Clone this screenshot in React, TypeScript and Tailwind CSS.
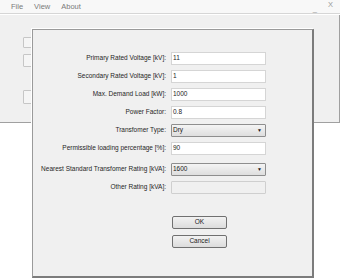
const font = { fontFamily: '"Liberation Sans", Arial, sans-serif' };

function Field({ label, children, gapTop }: { label: string; children: React.ReactNode; gapTop?: boolean }) {
  const mt = gapTop ? 'mt-[3px] ' : '';
  return (
    <>
      <div className={mt + 'flex h-[13px] items-center justify-end text-[6.5px] leading-none text-[#262626]'}>{label}</div>
      <div className={mt + 'h-[13px]'}>{children}</div>
    </>
  );
}

function TextBox({ value, disabled }: { value?: string; disabled?: boolean }) {
  return (
    <div
      className={
        'flex h-[13px] w-[95px] items-center border px-[1px] text-[6.5px] leading-none text-[#1a1a1a] ' +
        (disabled ? 'rounded-[1px] border-[#cfcfcf] bg-[#f0f0f0]' : 'border-[#d5d5d5] bg-white')
      }
    >
      {value}
    </div>
  );
}

function Combo({ value }: { value: string }) {
  return (
    <div className="flex h-[13px] w-[95px] items-center justify-between rounded-[1px] border border-[#8e8e8e] bg-gradient-to-b from-[#f4f4f4] to-[#dedede] pl-[1px] pr-[3px] text-[6.5px] leading-none text-[#1a1a1a]">
      <span>{value}</span>
      <span className="text-[5px] text-[#222]">▼</span>
    </div>
  );
}

function Button({ label }: { label: string }) {
  return (
    <div className="flex h-[13px] w-[55px] items-center justify-center rounded-[2px] border border-[#707070] bg-gradient-to-b from-[#f2f2f2] to-[#dcdcdc] text-[6.5px] leading-none text-[#1a1a1a]">
      {label}
    </div>
  );
}

export default function App() {
  return (
    <div className="relative h-[279px] w-[340px] overflow-hidden bg-white" style={font}>
      {/* main window menu */}
      <div className="flex h-[13px] items-center justify-between bg-[#f8f8f8] text-[7.5px] leading-none text-[#7a7a7a]">
        <div className="flex gap-[11px] pl-[11px]">
          <span>File</span>
          <span>View</span>
          <span>About</span>
        </div>
        <div className="flex items-start gap-[11px] pr-[7px] text-[#9a9a9a]">
          <span className="mt-[4px]">_</span>
          <span>X</span>
        </div>
      </div>
      <div className="h-[1px] bg-[#d6d6d6]" />
      <div className="h-[1px] bg-white" />

      {/* background window panel */}
      <div className="flex h-[108px] w-[340px] flex-col border-b border-r border-[#a0a0a0] bg-[#f0f0f0] pl-[23px] pt-[22px]">
        <div className="h-[11px] w-[60px] rounded-[1px] border border-[#c6c6c6] bg-[#f5f5f5]" />
        <div className="mt-[6px] h-[13px] w-[60px] rounded-[1px] border border-[#c6c6c6] bg-[#f5f5f5]" />
        <div className="mt-[23px] h-[14px] w-[60px] rounded-[1px] border border-[#c6c6c6] bg-[#f5f5f5]" />
      </div>

      {/* dialog */}
      <div className="absolute left-[32px] top-[29px] h-[249px] w-[282px] border border-b-2 border-r-2 border-[#9a9a9a] border-b-[#7c7c7c] border-r-[#7c7c7c] bg-[#f0f0f0] shadow-[-1px_-1px_0_#ffffff]">
        <div className="grid grid-cols-[133px_95px] gap-x-[5px] gap-y-[5px] pt-[22px]">
          <Field label="Primary Rated Voltage [kV]:"><TextBox value="11" /></Field>
          <Field label="Secondary Rated Voltage [kV]:"><TextBox value="1" /></Field>
          <Field label="Max. Demand Load [kW]:"><TextBox value="1000" /></Field>
          <Field label="Power Factor:"><TextBox value="0.8" /></Field>
          <Field label="Transfomer Type:"><Combo value="Dry" /></Field>
          <Field label="Permissible loading percentage [%]:"><TextBox value="90" /></Field>
          <Field label="Nearest Standard Transfomer Rating [kVA]:" gapTop><Combo value="1600" /></Field>
          <Field label="Other Rating [kVA]:"><TextBox disabled /></Field>
        </div>
        <div className="ml-[139px] mt-[22px] flex flex-col gap-[6px]">
          <Button label="OK" />
          <Button label="Cancel" />
        </div>
      </div>
    </div>
  );
}
